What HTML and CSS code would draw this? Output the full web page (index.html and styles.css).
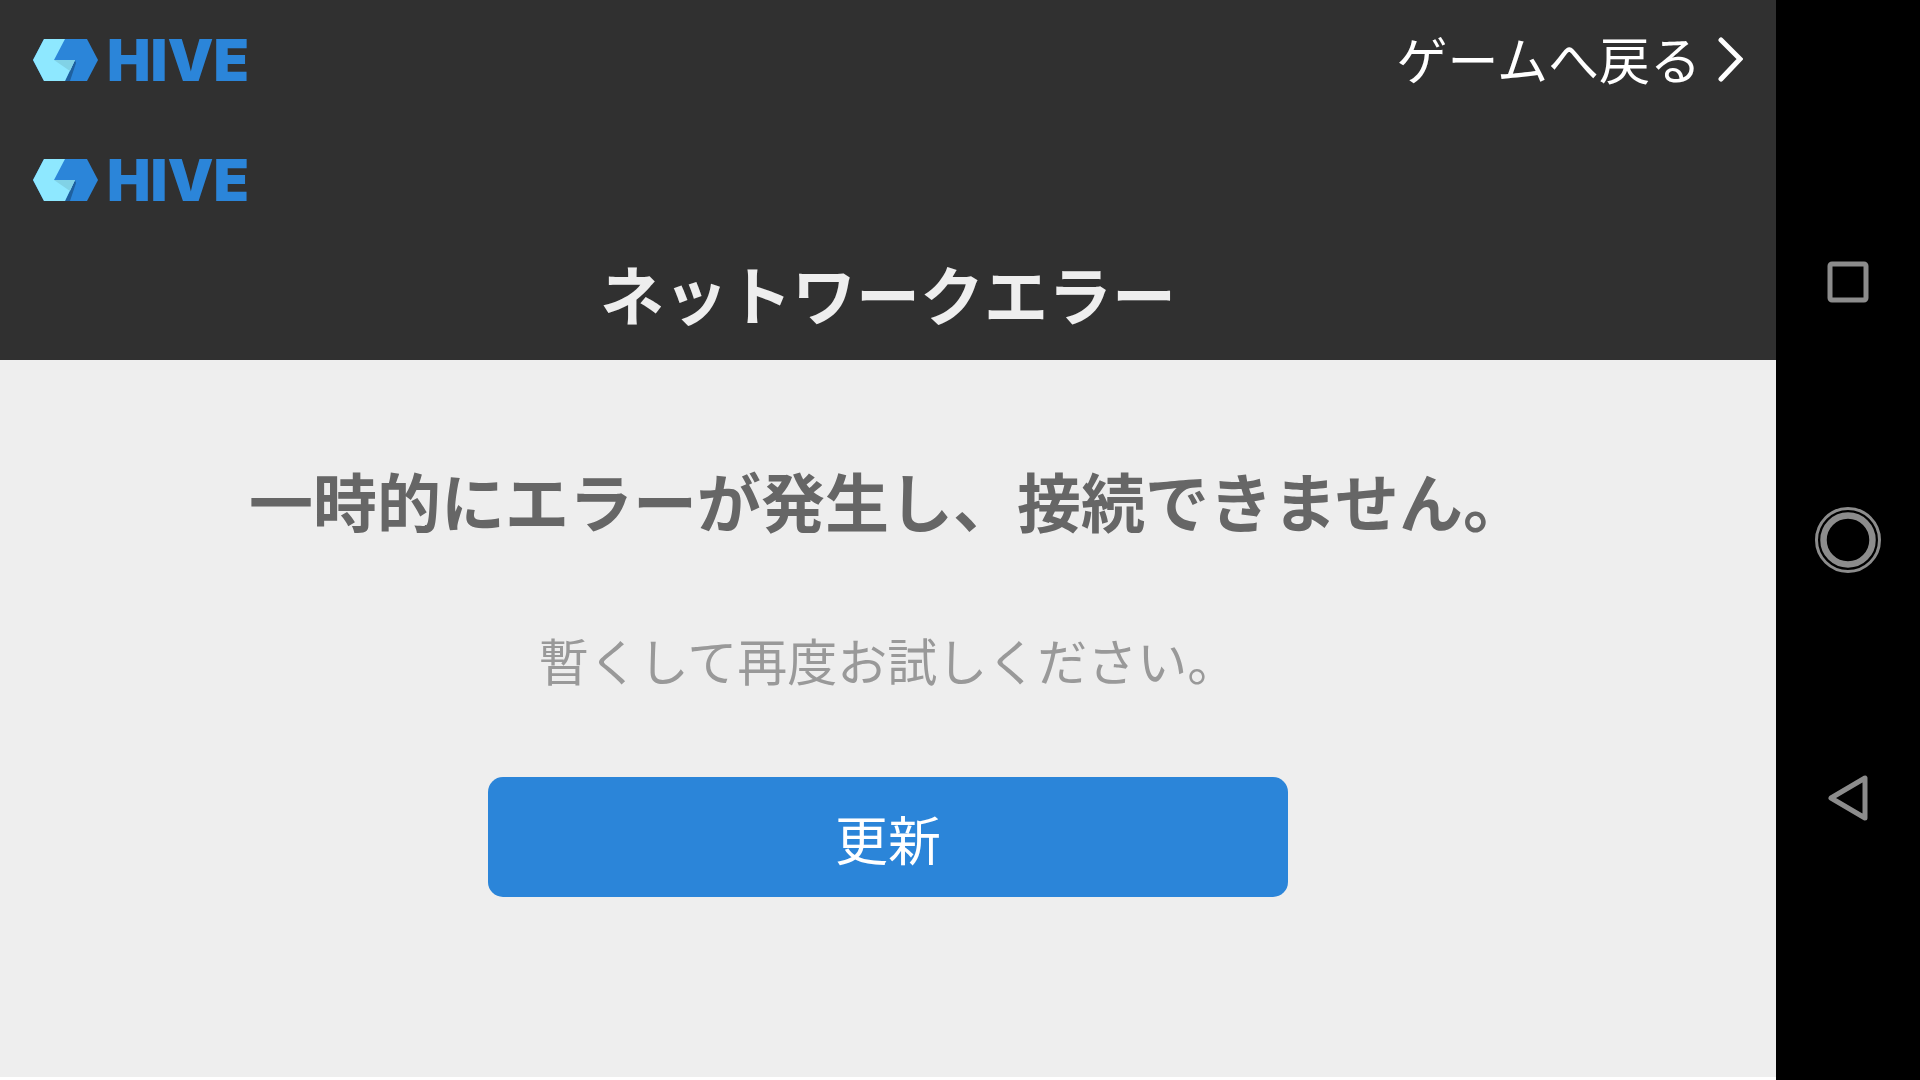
FILE: index.html
```
<!DOCTYPE html>
<html lang="ja">
<head>
  <meta charset="UTF-8">
  <meta name="viewport" content="width=device-width, initial-scale=1.0">
  <title>ネットワークエラー</title>
  <link rel="stylesheet" href="styles.css">
</head>
<body>
  <div class="page">
    <header class="header">
      <div class="bar">
        <a class="logo" href="#">
          <svg width="65" height="42" viewBox="0 0 65 42">
            <path fill="#2b85d9" d="M11 0H54L65 21L54 42H11L0 21Z"/>
            <path fill="#1f609e" d="M42 21L43 24L37 42H32Z"/>
            <path fill="#8ee8ff" d="M11 0H32L21 21H42L32 42H11L0 21Z"/>
            <path fill="#81d2e6" d="M21 21H42L37 32Z"/>
          </svg>
          <span>HIVE</span>
        </a>
        <a class="back" href="#">
          <span>ゲームへ戻る</span>
          <svg width="26" height="46" viewBox="0 0 26 46">
            <path d="M4 3L23 22L4 42" fill="none" stroke="#fff" stroke-width="5" stroke-linecap="round"/>
          </svg>
        </a>
      </div>
      <div class="bar">
        <a class="logo" href="#">
          <svg width="65" height="42" viewBox="0 0 65 42">
            <path fill="#2b85d9" d="M11 0H54L65 21L54 42H11L0 21Z"/>
            <path fill="#1f609e" d="M42 21L43 24L37 42H32Z"/>
            <path fill="#8ee8ff" d="M11 0H32L21 21H42L32 42H11L0 21Z"/>
            <path fill="#81d2e6" d="M21 21H42L37 32Z"/>
          </svg>
          <span>HIVE</span>
        </a>
      </div>
      <h1 class="title">ネットワークエラー</h1>
    </header>

    <main class="content">
      <h2 class="message">一時的にエラーが発生し、接続できません。</h2>
      <p class="hint">暫くして再度お試しください。</p>
      <button class="refresh" type="button">更新</button>
    </main>
  </div>

  <nav class="navbar">
    <button type="button" aria-label="履歴">
      <svg width="66" height="66" viewBox="0 0 66 66">
        <rect x="15" y="15" width="36" height="36" rx="2"/>
      </svg>
    </button>
    <button type="button" aria-label="ホーム">
      <svg width="66" height="66" viewBox="0 0 66 66">
        <circle cx="33" cy="33" r="31.5" stroke-width="3"/>
        <circle cx="33" cy="33" r="24.5" stroke-width="6.5"/>
      </svg>
    </button>
    <button type="button" aria-label="戻る">
      <svg width="66" height="66" viewBox="0 0 66 66">
        <path d="M50 13V53L16 33Z"/>
      </svg>
    </button>
  </nav>
</body>
</html>
```
FILE: styles.css
```
* {
  box-sizing: border-box;
}

body {
  margin: 0;
  display: flex;
  min-height: 100vh;
  background: #fff;
  font-family: "Noto Sans CJK JP", sans-serif;
}

.page {
  flex: 1;
  display: flex;
  flex-direction: column;
  padding-bottom: 3px;
}

/* header */
.header {
  background: #303030;
}

.bar {
  display: flex;
  align-items: center;
  justify-content: space-between;
  height: 120px;
  padding: 0 33px;
}

.logo {
  display: flex;
  align-items: center;
  gap: 9px;
  color: #2b85d9;
  font-family: Inter, sans-serif;
  font-size: 58px;
  font-weight: 900;
  line-height: 72px;
  text-decoration: none;
}

.back {
  display: flex;
  align-items: center;
  gap: 16px;
  color: #fff;
  font-size: 51px;
  line-height: 56px;
  text-decoration: none;
}

.back span {
  padding-bottom: 4px;
}

.title {
  margin: 0;
  padding-bottom: 16px;
  color: #eee;
  font-size: 64px;
  line-height: 104px;
  text-align: center;
}

/* error message */
.content {
  flex: 1;
  padding: 91px 0;
  background: #eee;
  text-align: center;
}

.message {
  margin: 0 0 68px;
  color: #666;
  font-size: 64px;
  line-height: 96px;
}

.hint {
  margin: 0 0 74px;
  color: #999;
  font-size: 50px;
  line-height: 88px;
}

.refresh {
  width: 45%;
  height: 120px;
  padding: 2px 0 0;
  border: 0;
  border-radius: 15px;
  background: #2b85d9;
  color: #fff;
  font-family: inherit;
  font-size: 53px;
}

/* system buttons */
.navbar {
  display: flex;
  flex-direction: column;
  align-items: center;
  justify-content: center;
  gap: 192px;
  width: 144px;
  background: #000;
}

.navbar button {
  padding: 0;
  border: 0;
  background: none;
}

.navbar svg {
  display: block;
  fill: none;
  stroke: #8c8c8c;
  stroke-width: 5;
  stroke-linejoin: round;
}
```
